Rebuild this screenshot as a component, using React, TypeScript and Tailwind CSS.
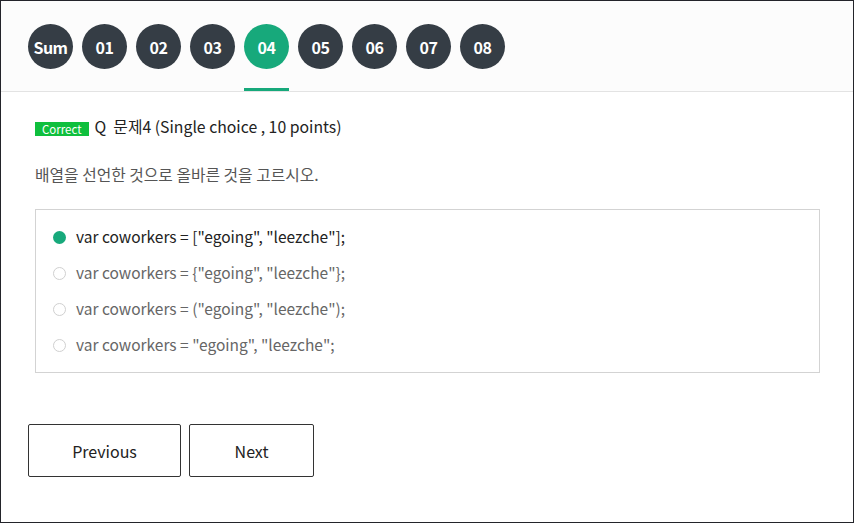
const tabs = ["Sum", "01", "02", "03", "04", "05", "06", "07", "08"];

const options = [
    'var coworkers = ["egoing", "leezche"];',
    'var coworkers = {"egoing", "leezche"};',
    'var coworkers = ("egoing", "leezche");',
    'var coworkers = "egoing", "leezche";',
];

export default function App() {
    const active = "04";
    const selected = 0;

    return <div className="w-[855px] h-[523px] bg-white" style={{ fontFamily: '"Noto Sans CJK KR", "Noto Sans", sans-serif' }}>
        <div className="w-[854px] h-[523px] border border-[#23242a] flex flex-col">
            {/* question tabs */}
            <div className="h-[91px] bg-[#fcfcfc] border-b border-[#e3e3e3] flex items-start gap-[9px] pl-[27px] pt-[23px]">
                {tabs.map((t) => (
                    <div key={t} className="flex flex-col items-center">
                        <div className={`w-[45px] h-[45px] rounded-full flex items-center justify-center text-white text-[16px] font-bold tracking-[-0.5px] ${t === active ? "bg-[#17a97b]" : "bg-[#353d45]"}`}>
                            {t}
                        </div>
                        {t === active && <div className="mt-[19px] w-[45px] h-[3px] bg-[#17a97b]" />}
                    </div>
                ))}
            </div>

            <div className="pl-[34px] pr-[33px] pt-[25px]">
                <div className="flex items-center text-[15.8px] text-[#222] leading-[20px]">
                    <span className="bg-[#0fbf3d] text-white text-[11.5px] leading-[14px] px-[7px] mr-[6px] mt-[3px]">Correct</span>
                    <span>Q&nbsp; 문제4 (Single choice , 10 points)</span>
                </div>
                <div className="mt-[28px] text-[15.8px] text-[#555] leading-[20px]">배열을 선언한 것으로 올바른 것을 고르시오.</div>

                <div className="mt-[24px] border border-[#d3d3d3] pt-[9px] pb-[9px] pl-[17px]">
                    {options.map((o, i) => (
                        <div key={o} className="h-[36px] flex items-center">
                            <span className={`w-[13px] h-[13px] rounded-full mr-[10px] ${i === selected ? "bg-[#17a97b]" : "border border-[#d0d0d0] bg-white"}`} />
                            <span className={`text-[15.5px] ${i === selected ? "text-[#222]" : "text-[#666]"}`}>{o}</span>
                        </div>
                    ))}
                </div>
            </div>

            <div className="pl-[27px] mt-[51px] flex gap-[8px]">
                <button className="w-[153px] h-[53px] border border-[#333] rounded-[2px] text-[16px] text-[#222] bg-white">Previous</button>
                <button className="w-[125px] h-[53px] border border-[#333] rounded-[2px] text-[16px] text-[#222] bg-white">Next</button>
            </div>
        </div>
    </div>
}
